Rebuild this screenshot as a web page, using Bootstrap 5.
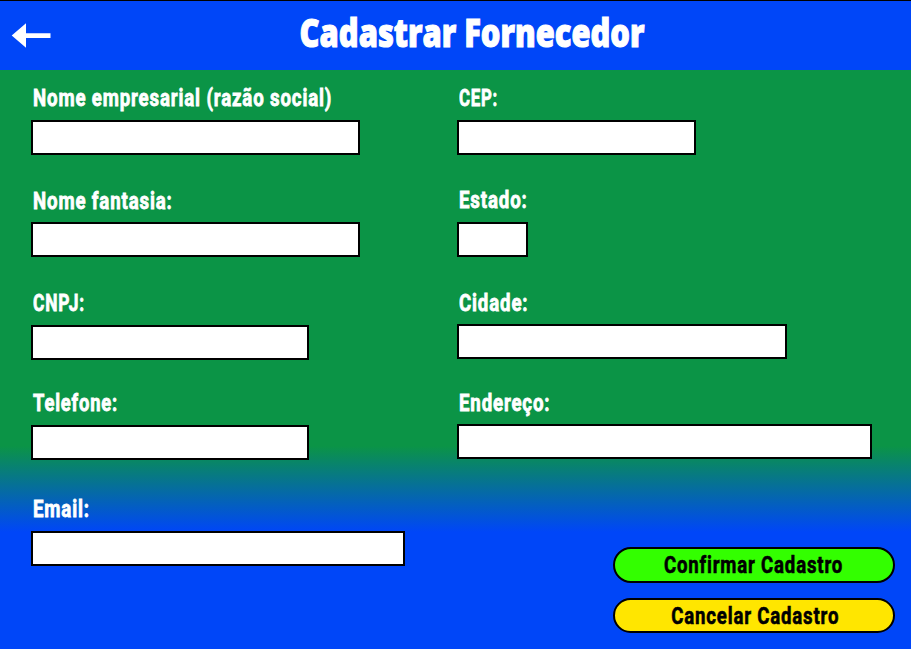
<!DOCTYPE html>
<html lang="pt-BR">
<head>
<meta charset="utf-8">
<meta name="viewport" content="width=device-width, initial-scale=1">
<title>Cadastrar Fornecedor</title>
<link href="https://cdn.jsdelivr.net/npm/bootstrap@5.3.0/dist/css/bootstrap.min.css" rel="stylesheet">
<script src="https://cdn.jsdelivr.net/npm/bootstrap@5.3.0/dist/js/bootstrap.bundle.min.js" defer></script>
<style>
:root{--azul:#0046f8;--verde:#0b9446}
body{font-family:Roboto,"Liberation Sans",sans-serif}
.tela{width:911px;height:649px;background:linear-gradient(to bottom,var(--verde) 446px,var(--azul) 532px)}
.topo{height:70px;border-top:1px solid #000;background:var(--azul);padding:0 12px 0 11px}
.topo svg{display:block}
.titulo{font-family:"Open Sans",sans-serif;font-weight:800;font-size:38px;line-height:60px;margin:0 0 8px -7px;transform:scaleX(.812);-webkit-text-stroke:1.1px #fff}
.formulario{padding:16px 0 0 31px}
.coluna-esq{width:426px}
.coluna-dir{width:430px}
.campo{height:69px}
.rotulo{display:block;width:max-content;height:24px;margin:0 0 10px 2.4px;font-size:24px;line-height:25px;font-weight:700;color:#fff;letter-spacing:1.1px;-webkit-text-stroke:.8px currentColor;transform:scaleX(var(--fit,.777));transform-origin:left}
.coluna-esq .rotulo{margin-left:1.7px}
.abaixo{line-height:26px}
.fit-cnpj{--fit:.725}
.fit-tel{--fit:.765}
.fit-cep{--fit:.7}
.entrada.form-control{height:35px;border:2px solid #000;background:#fff;padding:2px 8px;color:#000}
.w-329{width:329px}.w-278{width:278px}.w-374{width:374px}.w-239{width:239px}.w-71{width:71px}.w-330{width:330px}.w-415{width:415px}
.mb-31{margin-bottom:31px}.mb-33{margin-bottom:33px}.mb-34{margin-bottom:34px}.mb-37{margin-bottom:37px}
.acoes{width:282px;margin:88px 0 0 156px;gap:15px}
.botao.btn{height:36px;border:2px solid #000;color:#000;padding:0;font-size:24px;line-height:33px;font-weight:700;letter-spacing:1.05px}
.botao span{display:inline-block;transform:scaleX(.775);-webkit-text-stroke:.6px currentColor}
.confirmar.btn,.confirmar.btn:hover{background:#3f0}
.cancelar.btn,.cancelar.btn:hover{background:#ffe600}
.cancelar.btn{height:35px}
.cancelar span{margin-left:2px}
</style>
</head>
<body>
<main class="tela overflow-hidden">
  <header class="topo d-flex align-items-center">
    <a href="#" aria-label="Voltar">
      <svg width="41" height="26" viewBox="0 0 41 26" fill="#fff"><path d="M.7 12.500 15 .3V10.200H39.500V15.100H15V24.800Z"/></svg>
    </a>
    <h1 class="titulo flex-grow-1 text-center text-white text-nowrap">Cadastrar Fornecedor</h1>
  </header>
  <form class="formulario d-flex">
    <div class="coluna-esq">
      <div class="campo mb-33"><label class="rotulo" for="razao">Nome empresarial (razão social)</label><input id="razao" class="form-control entrada rounded-0 w-329"></div>
      <div class="campo mb-34"><label class="rotulo abaixo" for="fantasia">Nome fantasia:</label><input id="fantasia" class="form-control entrada rounded-0 w-329"></div>
      <div class="campo mb-31"><label class="rotulo fit-cnpj" for="cnpj">CNPJ:</label><input id="cnpj" class="form-control entrada rounded-0 w-278"></div>
      <div class="campo mb-37"><label class="rotulo fit-tel" for="telefone">Telefone:</label><input id="telefone" class="form-control entrada rounded-0 w-278"></div>
      <div class="campo"><label class="rotulo" for="email">Email:</label><input id="email" class="form-control entrada rounded-0 w-374"></div>
    </div>
    <div class="coluna-dir">
      <div class="campo mb-33"><label class="rotulo fit-cep" for="cep">CEP:</label><input id="cep" class="form-control entrada rounded-0 w-239"></div>
      <div class="campo mb-33"><label class="rotulo" for="estado">Estado:</label><input id="estado" class="form-control entrada rounded-0 w-71"></div>
      <div class="campo mb-31"><label class="rotulo abaixo" for="cidade">Cidade:</label><input id="cidade" class="form-control entrada rounded-0 w-330"></div>
      <div class="campo"><label class="rotulo abaixo" for="endereco">Endereço:</label><input id="endereco" class="form-control entrada rounded-0 w-415"></div>
      <div class="acoes d-flex flex-column">
        <button type="button" class="btn botao confirmar rounded-pill"><span>Confirmar Cadastro</span></button>
        <button type="button" class="btn botao cancelar rounded-pill"><span>Cancelar Cadastro</span></button>
      </div>
    </div>
  </form>
</main>
</body>
</html>
